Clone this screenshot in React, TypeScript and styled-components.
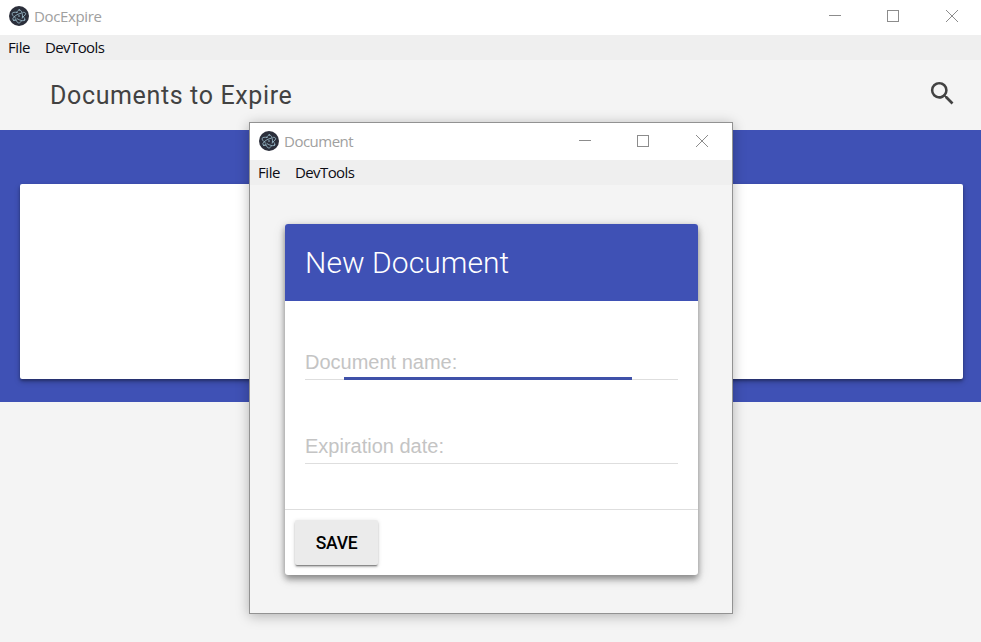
import React from "react";
import styled, { createGlobalStyle } from "styled-components";
import { MdSearch } from "react-icons/md";

const GlobalStyle = createGlobalStyle`
  *, *::before, *::after { box-sizing: border-box; }
  html, body { margin: 0; padding: 0; overflow: hidden; }
  body { font-family: Roboto, sans-serif; background: #f4f4f4; }
`;

const Desktop = styled.div`
  position: relative;
  width: 981px;
  height: 642px;
  overflow: hidden;
  background: #f4f4f4;
`;

const TitleBar = styled.header<{ $height: number }>`
  display: flex;
  align-items: flex-start;
  height: ${(p) => p.$height}px;
  padding-left: 9px;
  background: #fff;
`;

const LogoIcon = styled.svg<{ $top: number }>`
  flex: none;
  width: 20px;
  height: 20px;
  margin-top: ${(p) => p.$top}px;
`;

const WindowTitle = styled.span<{ $top: number; $spacing: number }>`
  flex: 1;
  margin: ${(p) => p.$top}px 0 0 5px;
  font: 400 15px/20px "Open Sans", sans-serif;
  letter-spacing: ${(p) => p.$spacing}px;
  color: #a0a0a0;
`;

const Controls = styled.div<{ $top: number; $right: number }>`
  display: grid;
  grid-template-columns: 58px 59px 14px;
  margin: ${(p) => p.$top}px ${(p) => p.$right}px 0 0;
`;

const ControlIcon = styled.svg`
  display: block;
  width: 14px;
  height: 14px;
  fill: none;
  stroke: #8c8c8c;
  stroke-width: 1;
`;

const MenuBar = styled.nav`
  display: flex;
  gap: 15px;
  height: 25px;
  padding-left: 8px;
  background: #efefef;
`;

const MenuItem = styled.span<{ $width: number; $spacing: number }>`
  width: ${(p) => p.$width}px;
  font: 400 15px/25px "Open Sans", sans-serif;
  letter-spacing: ${(p) => p.$spacing}px;
  white-space: nowrap;
  color: #0c0c14;
`;

const PageHeader = styled.div`
  display: flex;
  align-items: center;
  justify-content: space-between;
  height: 70px;
  padding: 0 23px 0 50px;
  color: #424242;
`;

const PageTitle = styled.h1`
  margin: 2px 0 0;
  font: 400 25px/34px Roboto, sans-serif;
  letter-spacing: 0.63px;
`;

const SearchIcon = styled(MdSearch)`
  width: 31px;
  height: 31px;
  margin-top: -4px;
`;

const Band = styled.section`
  height: 272px;
  padding: 54px 18px 23px 20px;
  background: #3f51b5;
`;

const Panel = styled.div`
  height: 195px;
  border-radius: 2px;
  background: #fff;
  box-shadow: 0 2px 3px rgba(0, 0, 0, 0.3), 0 3px 6px rgba(0, 0, 0, 0.2);
`;

const Dialog = styled.div`
  position: absolute;
  left: 249px;
  top: 122px;
  width: 484px;
  height: 492px;
  border: 1px solid #929292;
  background: #f4f4f4;
  box-shadow: 0 2px 12px rgba(0, 0, 0, 0.28);
`;

const Card = styled.form`
  display: flex;
  flex-direction: column;
  width: 413px;
  height: 351px;
  margin: 39px 0 0 35px;
  overflow: hidden;
  border-radius: 3px;
  background: #fff;
  box-shadow: 0 5px 6px rgba(0, 0, 0, 0.24), 0 2px 6px rgba(0, 0, 0, 0.22), 0 3px 14px rgba(0, 0, 0, 0.12);
`;

const CardHeader = styled.h2`
  height: 77px;
  margin: 0;
  padding-left: 20px;
  font: 300 30px/77px Roboto, sans-serif;
  letter-spacing: 0.07px;
  color: #fff;
  background: #3f51b5;
`;

const Fields = styled.div`
  display: flex;
  flex-direction: column;
  gap: 48px;
  height: 208px;
  padding: 43px 20px 0 20px;
`;

const Field = styled.label`
  position: relative;
  display: block;
  height: 36px;
  border-bottom: 1px solid #dedede;
  font: 400 20px/36px "Liberation Sans", sans-serif;
  color: #c4c4c4;
`;

const FocusLine = styled.span`
  position: absolute;
  left: 39px;
  bottom: -1px;
  width: 288px;
  height: 3px;
  background: #3f51a9;
`;

const Actions = styled.div`
  height: 66px;
  padding: 10px 10px;
  border-top: 1px solid #dedede;
`;

const SaveButton = styled.button`
  display: block;
  width: 83px;
  height: 45px;
  padding: 0;
  border: 0;
  border-radius: 2px;
  background: #ebebeb;
  color: #000;
  font: 500 17.5px/46px Roboto, sans-serif;
  letter-spacing: -0.25px;
  box-shadow: 0 2px 2px rgba(0, 0, 0, 0.2), 0 2px 1px -1px rgba(0, 0, 0, 0.3), 0 1px 4px rgba(0, 0, 0, 0.15);
`;

function Logo({ top }: { top: number }) {
  return (
    <LogoIcon $top={top} viewBox="0 0 20 20">
      <circle cx="10" cy="10" r="10" fill="#2b2e3a" />
      <g fill="none" stroke="#9fc3d2" strokeWidth="0.8" strokeLinecap="round">
        <path d="M8.2 6.4C5.7 6 3.7 6.3 3.2 7.2c-.6 1 .8 3 3.2 4.6" />
        <path d="M8 12.6c.8.5 1.500.9 2.300 1.200 2.600 1.100 4.900 1.200 5.500.2.400-.8-.3-2.100-1.700-3.400" />
        <path d="M12.200 7.200c-1.400.2-3 .9-4.600 1.800-2.700 1.600-4.300 3.500-3.700 4.600.4.700 1.700.9 3.300.6" />
        <path d="M13.700 11.200c2.200-1.600 3.400-3.200 2.800-4.100-.3-.6-1.300-.8-2.500-.8" />
        <path d="M6.500 13c.8 2.400 2.200 4 3.400 4 1 0 1.900-.9 2.600-2.300" />
        <path d="M13.200 12.200c.200-.7.300-1.500.300-2.300 0-3.200-1.400-5.900-3-6-1.100 0-2.100 1-2.800 2.600" />
      </g>
      <g fill="#9fc3d2">
        <circle cx="10" cy="10" r="0.8" />
        <circle cx="4.900" cy="14.200" r="0.7" />
        <circle cx="15.500" cy="14" r="0.7" />
        <circle cx="10.300" cy="3.900" r="0.7" />
      </g>
    </LogoIcon>
  );
}

function WindowControls({ top, right }: { top: number; right: number }) {
  return (
    <Controls $top={top} $right={right}>
      <ControlIcon viewBox="0 0 14 14"><path d="M1 6.5h12" /></ControlIcon>
      <ControlIcon viewBox="0 0 14 14"><rect x="1.5" y="1.5" width="11" height="11" /></ControlIcon>
      <ControlIcon viewBox="0 0 14 14"><path d="M1 1l12 12M13 1L1 13" /></ControlIcon>
    </Controls>
  );
}

function Menu() {
  return (
    <MenuBar>
      <MenuItem $width={22} $spacing={-0.45}>File</MenuItem>
      <MenuItem $width={60} $spacing={-0.6}>DevTools</MenuItem>
    </MenuBar>
  );
}

export default function App() {
  return (
    <>
      <GlobalStyle />
      <Desktop>
        <TitleBar $height={35}>
          <Logo top={6} />
          <WindowTitle $top={6} $spacing={-0.35}>DocExpire</WindowTitle>
          <WindowControls top={9} right={22} />
        </TitleBar>
        <Menu />
        <PageHeader>
          <PageTitle>Documents to Expire</PageTitle>
          <SearchIcon />
        </PageHeader>
        <Band>
          <Panel />
        </Band>
        <Dialog>
          <TitleBar $height={37}>
            <Logo top={8} />
            <WindowTitle $top={8} $spacing={-0.5}>Document</WindowTitle>
            <WindowControls top={11} right={23} />
          </TitleBar>
          <Menu />
          <Card>
            <CardHeader>New Document</CardHeader>
            <Fields>
              <Field>
                Document name:
                <FocusLine />
              </Field>
              <Field>Expiration date:</Field>
            </Fields>
            <Actions>
              <SaveButton type="button">SAVE</SaveButton>
            </Actions>
          </Card>
        </Dialog>
      </Desktop>
    </>
  );
}
